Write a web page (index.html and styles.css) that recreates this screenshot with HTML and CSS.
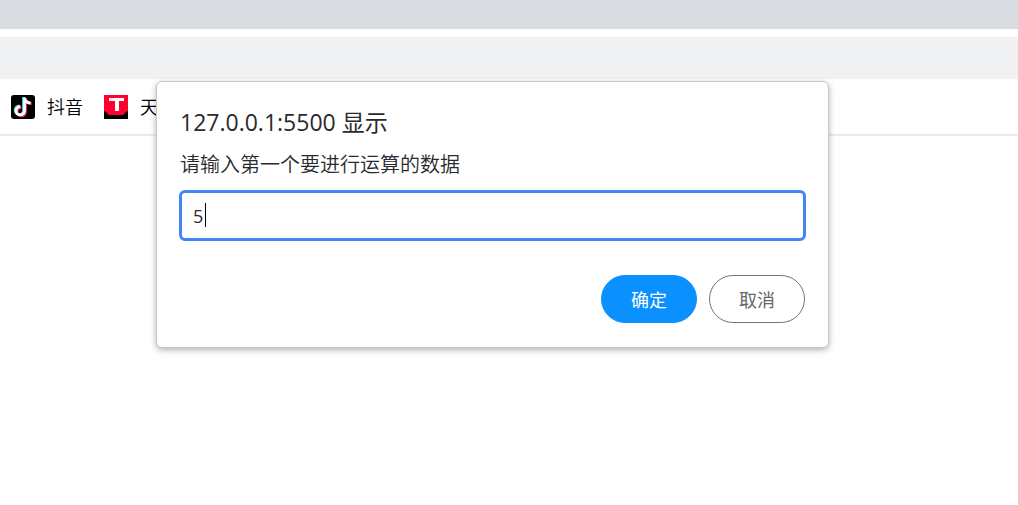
FILE: index.html
```html
<!DOCTYPE html>
<html lang="zh-CN">
<head>
<meta charset="UTF-8">
<title>127.0.0.1:5500</title>
<link rel="stylesheet" href="styles.css">
</head>
<body>
<header class="browser">
  <div class="tabs"></div>
  <div class="address"></div>
  <nav class="bookmarks">
    <a href="#">
      <svg class="icon" viewBox="0 0 24 24" aria-hidden="true">
        <rect width="24" height="24" rx="3" fill="#000"/>
        <g fill="none" stroke-width="2.800">
          <path d="M12.500 2v13.200a4.200 4.200 0 1 1-4.200-4.200M12.500 3c.5 3 2.500 4.500 6 4.500" stroke="#25e8e4"/>
          <path d="M14.500 3.500v13.200a4.200 4.200 0 1 1-4.200-4.200M14.500 3.500c.5 3 2.500 5 6 5" stroke="#fe2858"/>
          <path d="M13.500 2.500v13.200a4.200 4.200 0 1 1-4.200-4.200M13.500 3c.5 3 2.500 5 6 5" stroke="#fff"/>
        </g>
      </svg>
      <span>抖音</span>
    </a>
    <a href="#">
      <svg class="icon" viewBox="0 0 24 24" aria-hidden="true">
        <rect width="24" height="24" fill="#ff0030"/>
        <path d="M0 16l2 1 3 3h14l3-3 2-1v8H0z" fill="#000"/>
        <path d="M5 3h15v3h-5v10h-4V6H5z" fill="#fff"/>
      </svg>
      <span>天猫</span>
    </a>
  </nav>
</header>

<form class="dialog" role="dialog" aria-labelledby="origin">
  <h1 id="origin">127.0.0.1:5500 显示</h1>
  <label for="value">请输入第一个要进行运算的数据</label>
  <div class="field">
    <input type="text" id="value" value="5" autocomplete="off">
    <span class="caret"></span>
  </div>
  <div class="actions">
    <button type="submit" class="ok">确定</button>
    <button type="button" class="cancel">取消</button>
  </div>
</form>
</body>
</html>
```
FILE: styles.css
```css
:root{
  --blue:#4285f4;
  --ok:#0a91ff;
  --dark:#292a2d;
}
*{box-sizing:border-box;margin:0;padding:0;}
body{background:#fff;color:var(--dark);font-family:"Open Sans","Noto Sans CJK SC",sans-serif;}

.tabs{height:29px;background:#d9dce1;}
.address{height:42px;margin-top:8px;background:#f0f1f3;}
.bookmarks{display:flex;gap:21px;height:57px;padding:0 11px;align-items:center;border-bottom:2px solid #ebebeb;}
.bookmarks a{display:flex;gap:12px;align-items:center;color:#000;font-size:18px;font-weight:350;line-height:24px;text-decoration:none;white-space:nowrap;}
.icon{width:24px;height:24px;}

/* diálogo sobre a barra de favoritos */
.dialog{
  position:absolute;
  top:81px;
  left:156px;
  right:189px;
  padding:24px 22px;
  background:#fff;
  border:1px solid #c6c8c8;
  border-radius:6px;
  box-shadow:0 2px 6px rgba(0,0,0,.3);
}
h1{padding-left:1px;font-size:23px;font-weight:400;line-height:32px;}
.dialog label{display:block;margin:13px 0 11px;padding-left:1px;font-size:20px;font-weight:350;line-height:28px;}
.field{position:relative;}
.field input{
  display:block;
  width:100%;
  height:51px;
  padding:0 11px;
  border:3px solid var(--blue);
  border-radius:6px;
  outline:none;
  background:#fff;
  color:var(--dark);
  font:18px "Open Sans","Noto Sans CJK SC",sans-serif;
}
.caret{position:absolute;top:13px;left:26px;width:1px;height:24px;background:#000;}
.actions{display:flex;justify-content:flex-end;gap:12px;margin-top:34px;padding-right:1px;}
button{width:96px;height:48px;border:1px solid #757575;border-radius:24px;background:#fff;color:#666;font:18px "Noto Sans CJK SC",sans-serif;cursor:pointer;}
.ok{border-color:var(--ok);background:var(--ok);color:#fff;}
```
